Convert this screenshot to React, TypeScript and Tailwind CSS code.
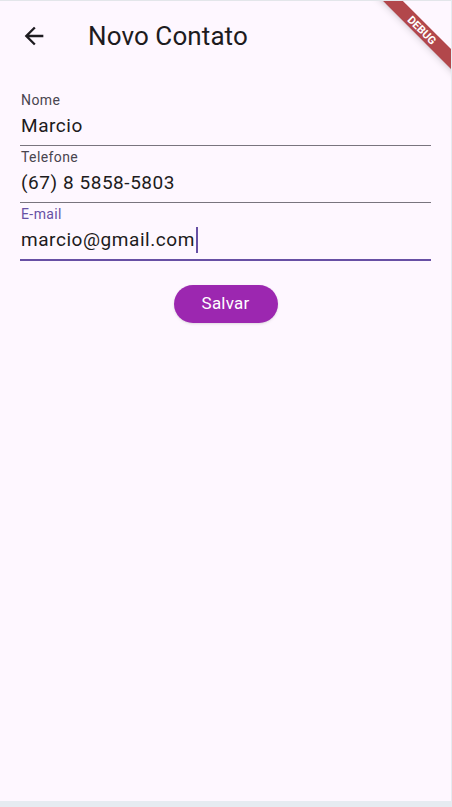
import React from "react";

const ArrowBack = () => (
  <svg viewBox="0 0 24 24" className="h-[28px] w-[28px] fill-[#1d1b20]">
    <path d="M20 11H7.83l5.59-5.59L12 4l-8 8 8 8 1.41-1.41L7.83 13H20v-2z" />
  </svg>
);

type FieldProps = {
  label: string;
  value: string;
  focused?: boolean;
};

const Field = ({ label, value, focused }: FieldProps) => (
  <div
    className={
      focused
        ? "border-b-2 border-[#6750a4] pb-[4px] pl-[1px]"
        : "border-b border-[#79747e] pb-[4px] pl-[1px]"
    }
  >
    <div
      className={
        focused
          ? "h-[18px] text-[14px] leading-[18px] tracking-[0.4px] text-[#6750a4]"
          : "h-[18px] text-[14px] leading-[18px] tracking-[0.4px] text-[#49454f]"
      }
    >
      {label}
    </div>
    <div className="mt-[2px] flex h-[30px] items-center text-[19px] tracking-[0.55px] text-[#1d1b20]">
      <span>{value}</span>
      {focused && <span className="ml-[1px] h-[26px] w-[2px] bg-[#6750a4]" />}
    </div>
  </div>
);

export default function App() {
  return (
    <div
      className="h-[807px] w-[452px] bg-[#e6ebf1]"
      style={{ fontFamily: "Roboto, 'Noto Sans', sans-serif" }}
    >
      <div className="relative h-[801px] w-[451px] overflow-hidden border-t border-[#e3e6ea] bg-[#fef7ff]">
        {/* App bar */}
        <div className="flex h-[70px] items-center">
          <div className="ml-[20px] flex h-[28px] w-[28px] items-center justify-center">
            <ArrowBack />
          </div>
          <h1 className="ml-[40px] text-[26px] tracking-[0.1px] text-[#1d1b20]">Novo Contato</h1>
        </div>

        {/* Form */}
        <div className="flex flex-col gap-[2px] px-5 pt-[20px]">
          <Field label="Nome" value="Marcio" />
          <Field label="Telefone" value="(67) 8 5858-5803" />
          <Field label="E-mail" value="marcio@gmail.com" focused />
        </div>

        <div className="mt-[24px] flex justify-center">
          <button className="h-[38px] w-[104px] rounded-full bg-[#9c27b0] text-[17px] tracking-[0.2px] text-white shadow-sm">
            Salvar
          </button>
        </div>

        {/* Debug banner */}
        <div className="absolute left-[362px] top-[22px] flex h-[14px] w-[120px] rotate-45 items-center justify-center bg-[#b2474b] shadow-md">
          <span className="text-[11px] font-bold leading-none text-white">DEBUG</span>
        </div>
      </div>
    </div>
  );
}
